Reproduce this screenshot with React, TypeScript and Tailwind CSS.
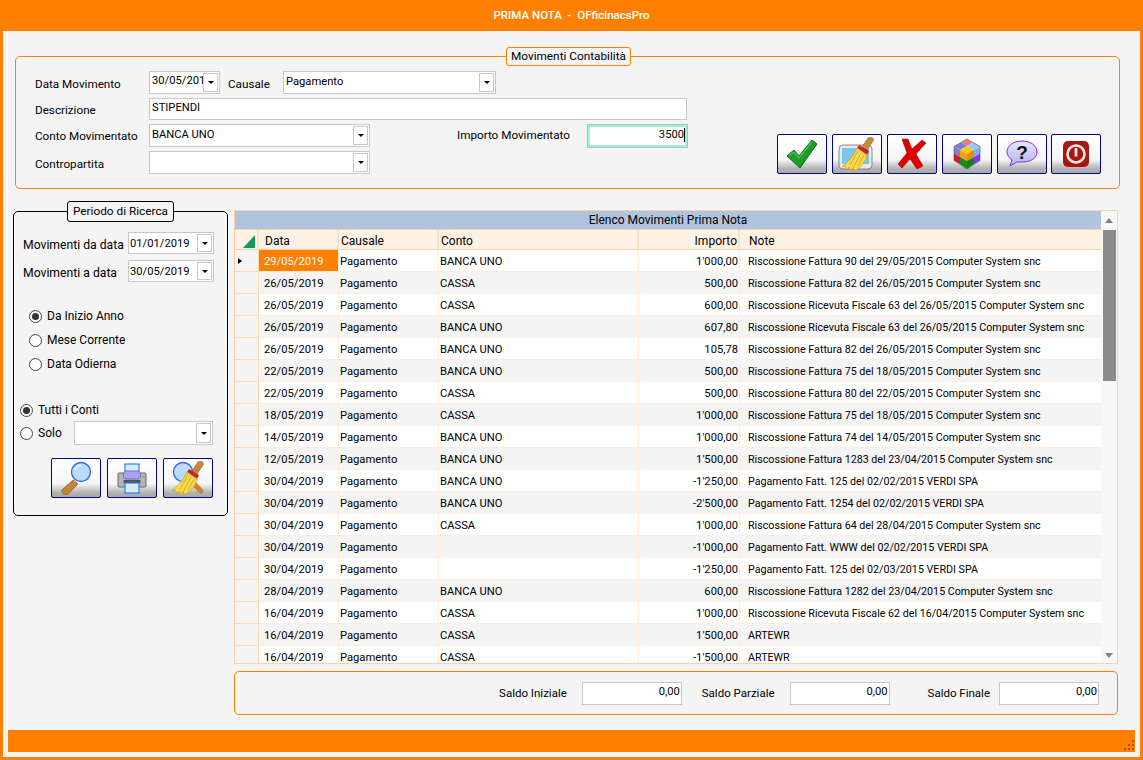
import React from "react";

const font = "font-['Roboto','Open_Sans',sans-serif]";

const rows: [string, string, string, string, string][] = [
  ["29/05/2019", "Pagamento", "BANCA UNO", "1'000,00", "Riscossione Fattura 90 del 29/05/2015 Computer System snc"],
  ["26/05/2019", "Pagamento", "CASSA", "500,00", "Riscossione Fattura 82 del 26/05/2015 Computer System snc"],
  ["26/05/2019", "Pagamento", "CASSA", "600,00", "Riscossione Ricevuta Fiscale 63 del 26/05/2015 Computer System snc"],
  ["26/05/2019", "Pagamento", "BANCA UNO", "607,80", "Riscossione Ricevuta Fiscale 63 del 26/05/2015 Computer System snc"],
  ["26/05/2019", "Pagamento", "BANCA UNO", "105,78", "Riscossione Fattura 82 del 26/05/2015 Computer System snc"],
  ["22/05/2019", "Pagamento", "BANCA UNO", "500,00", "Riscossione Fattura 75 del 18/05/2015 Computer System snc"],
  ["22/05/2019", "Pagamento", "CASSA", "500,00", "Riscossione Fattura 80 del 22/05/2015 Computer System snc"],
  ["18/05/2019", "Pagamento", "CASSA", "1'000,00", "Riscossione Fattura 75 del 18/05/2015 Computer System snc"],
  ["14/05/2019", "Pagamento", "BANCA UNO", "1'000,00", "Riscossione Fattura 74 del 14/05/2015 Computer System snc"],
  ["12/05/2019", "Pagamento", "BANCA UNO", "1'500,00", "Riscossione Fattura 1283 del 23/04/2015 Computer System snc"],
  ["30/04/2019", "Pagamento", "BANCA UNO", "-1'250,00", "Pagamento Fatt. 125 del 02/02/2015 VERDI SPA"],
  ["30/04/2019", "Pagamento", "BANCA UNO", "-2'500,00", "Pagamento Fatt. 1254 del 02/02/2015 VERDI SPA"],
  ["30/04/2019", "Pagamento", "CASSA", "1'000,00", "Riscossione Fattura 64 del 28/04/2015 Computer System snc"],
  ["30/04/2019", "Pagamento", "", "-1'000,00", "Pagamento Fatt. WWW del 02/02/2015 VERDI SPA"],
  ["30/04/2019", "Pagamento", "", "-1'250,00", "Pagamento Fatt. 125 del 02/03/2015 VERDI SPA"],
  ["28/04/2019", "Pagamento", "BANCA UNO", "600,00", "Riscossione Fattura 1282 del 23/04/2015 Computer System snc"],
  ["16/04/2019", "Pagamento", "CASSA", "1'000,00", "Riscossione Ricevuta Fiscale 62 del 16/04/2015 Computer System snc"],
  ["16/04/2019", "Pagamento", "CASSA", "1'500,00", "ARTEWR"],
  ["16/04/2019", "Pagamento", "CASSA", "-1'500,00", "ARTEWR"],
];

function Arrow() {
  return <span className="w-0 h-0 border-x-[3px] border-x-transparent border-t-[3px] border-t-black" />;
}

function Combo({ text, className, textClass = "pl-[1px]" }: { text: string; className: string; textClass?: string }) {
  return (
    <div className={`flex bg-white border border-[#c8c8c8] p-px ${className}`}>
      <span className={`flex-1 text-[11.2px] leading-[15px] overflow-hidden whitespace-nowrap ${textClass}`}>{text}</span>
      <span className="w-[15px] shrink-0 border border-[#c8c8c8] flex items-center justify-center">
        <Arrow />
      </span>
    </div>
  );
}

function Radio({ checked, label, className }: { checked?: boolean; label: string; className: string }) {
  return (
    <div className={`flex items-center h-[16px] ${className}`}>
      <span className="w-[13px] h-[13px] rounded-full border border-[#444] bg-white flex items-center justify-center shrink-0">
        {checked && <span className="w-[7px] h-[7px] rounded-full bg-[#333]" />}
      </span>
      <span className="ml-[5px] text-[12px]">{label}</span>
    </div>
  );
}

function IconButton({ children, className = "" }: { children: React.ReactNode; className?: string }) {
  return (
    <div className={`w-[50px] h-[40px] shrink-0 border border-[#000080] rounded-[2px] bg-[linear-gradient(to_bottom,#ffffff_0%,#f6f6f6_65%,#b4b4b4_88%,#a8a8a8_100%)] flex items-center justify-center ${className}`}>
      {children}
    </div>
  );
}

const Check = () => (
  <svg width="32" height="30" viewBox="0 0 32 30">
    <path d="M1 17 L8 11 L13 17 L26 1 L31 5 L14 29 Z" fill="#1f9a2a" stroke="#136e1c" strokeWidth="1" strokeLinejoin="round" />
    <path d="M3 17 L8 13 L13 19 L26 3" fill="none" stroke="#4cc255" strokeWidth="1.2" />
  </svg>
);

const Cross = () => (
  <svg width="30" height="32" viewBox="0 0 30 32">
    <path d="M5 1 L11 1 L15 11 L25 2 L29 5 L19 16 L26 28 L20 31 L13 21 L5 30 L1 26 L10 15 Z" fill="#dd0000" stroke="#b00000" strokeWidth="0.6" strokeLinejoin="round" />
  </svg>
);

const BroomHead = () => (
  <g>
    <path d="M27 1 C29 -1 34 1 32 4 L26 13 L21 10 Z" fill="#c98a36" stroke="#8a5a1c" strokeWidth="0.6" />
    <path d="M18 8 L28 14 L26 18 L16 11 Z" fill="#c8222a" />
    <path d="M16 11 L26 18 C25 24 20 30 14 34 L12 31 L10 34 L8 30 L6 33 L4 29 L1 30 C7 25 13 18 16 11 Z" fill="#f7d84a" stroke="#c79a1a" strokeWidth="0.7" />
    <path d="M17 14 L9 28 M20 16 L12 31 M23 18 L17 29" stroke="#c79a1a" strokeWidth="0.7" fill="none" />
  </g>
);

const Broom = () => (
  <svg width="38" height="34" viewBox="0 0 38 34">
    <rect x="1" y="8" width="33" height="24" rx="4" fill="#e8e8e8" stroke="#888" />
    <rect x="4" y="11" width="27" height="16" fill="#7cc4ea" />
    <g transform="translate(3 0)"><BroomHead /></g>
  </svg>
);

const Cube = () => (
  <svg width="28" height="32" viewBox="0 0 28 32">
    <path d="M14 1 L20 4.5 L14 8 L8 4.5 Z" fill="#f07a8a" />
    <path d="M20 4.5 L27 8.5 L21 12 L14 8 Z" fill="#9cc8f8" />
    <path d="M8 4.5 L14 8 L7 12 L1 8.5 Z" fill="#7c7ce0" />
    <path d="M14 8 L21 12 L14 16 L7 12 Z" fill="#f8c818" />
    <path d="M1 8.5 L7 12 L7 19 L1 15.5 Z" fill="#8080c8" />
    <path d="M7 12 L14 16 L14 23 L7 19 Z" fill="#f0a010" />
    <path d="M14 16 L21 12 L21 19 L14 23 Z" fill="#e88c08" />
    <path d="M21 12 L27 8.5 L27 15.5 L21 19 Z" fill="#7ab0f0" />
    <path d="M1 15.5 L7 19 L7 26 L1 22.5 Z" fill="#d81818" />
    <path d="M7 19 L14 23 L14 31 L7 26 Z" fill="#188c20" />
    <path d="M14 23 L21 19 L21 26 L14 31 Z" fill="#108018" />
    <path d="M21 19 L27 15.5 L27 22.5 L21 26 Z" fill="#8a30f0" />
    <path d="M14 1 L27 8.5 L27 22.5 L14 31 L1 22.5 L1 8.5 Z" fill="none" stroke="#666" strokeWidth="0.7" />
  </svg>
);

const Question = () => (
  <svg width="32" height="28" viewBox="0 0 32 28">
    <defs>
      <linearGradient id="q" x1="0" y1="0" x2="0" y2="1">
        <stop offset="0" stopColor="#e8e8ff" />
        <stop offset="1" stopColor="#b0b0f8" />
      </linearGradient>
    </defs>
    <path d="M16 1 C25 1 31 6 31 12 C31 18 25 22 16 22 L11 22 L4 26 L6 20 C3 18 1 15 1 12 C1 6 7 1 16 1 Z" fill="url(#q)" stroke="#8a2be2" strokeWidth="1" />
    <text x="16" y="19" textAnchor="middle" fontSize="19" fontWeight="700" fontFamily="Liberation Sans" fill="#111">?</text>
  </svg>
);

const Power = () => (
  <svg width="28" height="28" viewBox="0 0 28 28">
    <rect x="1" y="1" width="26" height="26" rx="5" fill="#aa1512" />
    <circle cx="14" cy="14" r="8.5" fill="none" stroke="#f8e4e0" strokeWidth="2.6" />
    <rect x="12.6" y="8" width="2.8" height="8.5" fill="#f8e4e0" />
  </svg>
);

const Magnifier = () => (
  <svg width="34" height="34" viewBox="0 0 34 34">
    <path d="M14 19 L3 29 C2 32 6 35 9 33 L19 23 Z" fill="#c88432" stroke="#85551c" strokeWidth="0.7" />
    <circle cx="22" cy="11" r="9.5" fill="#bcdcff" stroke="#3a66ee" strokeWidth="1.4" />
    <path d="M16 9 A7 7 0 0 1 22 4" fill="none" stroke="#fff" strokeWidth="1.2" />
  </svg>
);

const Printer = () => (
  <svg width="30" height="32" viewBox="0 0 30 32">
    <rect x="1" y="11" width="28" height="14" rx="1" fill="#b4b4b4" stroke="#666" />
    <rect x="8" y="2" width="14" height="11" fill="#d4ecff" stroke="#2a7af0" strokeWidth="1.2" />
    <rect x="6.5" y="9" width="17" height="8" rx="3" fill="#a8a0f0" stroke="#7070c8" />
    <rect x="6.5" y="18" width="17" height="3" fill="#555" />
    <rect x="8" y="21" width="14" height="10" fill="#d4ecff" stroke="#2a7af0" strokeWidth="1.2" />
    <circle cx="26.5" cy="15" r="1" fill="#60c030" />
  </svg>
);

const SearchBroom = () => (
  <svg width="34" height="34" viewBox="0 0 34 34">
    <circle cx="12" cy="11" r="9.5" fill="#bcdcff" stroke="#3a66ee" strokeWidth="1.4" />
    <path d="M18 18 L30 30" stroke="#c88432" strokeWidth="5" strokeLinecap="round" />
    <BroomHead />
  </svg>
);

export default function App() {
  return (
    <div className={`w-[1143px] h-[760px] overflow-hidden bg-[#ff8000] flex flex-col text-[11.7px] text-black ${font}`}>
      <div className="h-[31px] shrink-0 flex items-center justify-center text-white font-medium text-[11.5px] whitespace-pre">
        PRIMA NOTA  -  OFficinacsPro
      </div>

      <div className="flex-1 mx-[3px] mb-[3px] bg-[#f4f4f4] flex flex-col min-h-0">
        {/* Movimenti Contabilità */}
        <div className="relative mt-[25px] ml-[12px] mr-[20px] h-[133px] shrink-0 border border-[#ff8000] rounded-[5px] flex">
          <div className="absolute left-[490px] -top-[10px] h-[19px] px-[4px] bg-[#f4f4f4] border border-[#ff8000] rounded-[3px] text-[11.8px] leading-[16px] whitespace-nowrap">
            Movimenti Contabilità
          </div>

          <div className="w-[671px] shrink-0 pt-[13px]">
            <div className="flex items-center h-[24px]">
              <span className="ml-[19px] w-[114px] shrink-0 pt-[6px]">Data Movimento</span>
              <Combo text="30/05/2019" className="w-[71px] h-[23px]" />
              <span className="ml-[8px] w-[55px] shrink-0 pt-[6px]">Causale</span>
              <Combo text="Pagamento" textClass="pl-[1px] pt-[1px]" className="w-[213px] h-[23px]" />
            </div>
            <div className="flex items-center h-[22px] mt-[4px]">
              <span className="ml-[19px] w-[114px] shrink-0 pt-[4px]">Descrizione</span>
              <div className="w-[538px] h-[22px] bg-white border border-[#c8c8c8] pl-[2px] text-[11.2px] leading-[17px]">STIPENDI</div>
            </div>
            <div className="flex items-center h-[23px] mt-[4px]">
              <span className="ml-[19px] w-[114px] shrink-0 pt-[2px]">Conto Movimentato</span>
              <Combo text="BANCA UNO" textClass="pl-[1px] pt-[1px]" className="w-[221px] h-[23px]" />
              <span className="ml-[87px] w-[131px] shrink-0">Importo Movimentato</span>
              <div className="w-[99px] h-[22px] bg-white border-2 border-[#9af5dc] outline outline-1 outline-[#bbbbbb] flex justify-end text-[11.2px]">
                <span className="h-[14px] mt-[1px] border-r border-black leading-[14px]">3500</span>
              </div>
            </div>
            <div className="flex items-center h-[23px] mt-[4px]">
              <span className="ml-[19px] w-[114px] shrink-0 pt-[4px]">Contropartita</span>
              <Combo text="" className="w-[221px] h-[23px]" />
            </div>
          </div>

          <div className="flex ml-[90px] mt-[77px] h-[40px]">
            <IconButton><Check /></IconButton>
            <IconButton className="ml-[5px]"><Broom /></IconButton>
            <IconButton className="ml-[5px]"><Cross /></IconButton>
            <IconButton className="ml-[5px]"><Cube /></IconButton>
            <IconButton className="ml-[5px]"><Question /></IconButton>
            <IconButton className="ml-[4px]"><Power /></IconButton>
          </div>
        </div>

        <div className="flex mt-[21px] pl-[10px] min-h-0">
          {/* Periodo di Ricerca */}
          <div className="relative mt-[1px] w-[215px] h-[305px] shrink-0 border border-black rounded-[5px] bg-[#f4f4f4]">
            <div className="absolute left-[53px] -top-[11px] w-[107px] h-[21px] bg-[#f4f4f4] border border-black rounded-[3px] text-center text-[11.8px] leading-[18px]">
              Periodo di Ricerca
            </div>
            <div className="pt-[20px] pl-[9px]">
              <div className="flex items-center h-[22px]">
                <span className="w-[105px] shrink-0 text-[12.2px] whitespace-nowrap pt-[4px]">Movimenti da data</span>
                <Combo text="01/01/2019" textClass="pt-[2px]" className="w-[86px] h-[22px]" />
              </div>
              <div className="flex items-center h-[22px] mt-[6px]">
                <span className="w-[105px] shrink-0 text-[12.2px] whitespace-nowrap pt-[4px]">Movimenti a data</span>
                <Combo text="30/05/2019" textClass="pt-[2px]" className="w-[86px] h-[22px]" />
              </div>
            </div>
            <div className="mt-[26px] ml-[15px] flex flex-col gap-[8px]">
              <Radio checked label="Da Inizio Anno" className="" />
              <Radio label="Mese Corrente" className="" />
              <Radio label="Data Odierna" className="" />
            </div>
            <Radio checked label="Tutti i Conti" className="mt-[30px] ml-[6px]" />
            <div className="flex items-center mt-[3px] ml-[6px]">
              <Radio label="Solo" className="w-[54px] shrink-0" />
              <Combo text="" className="w-[139px] h-[24px] shrink-0" />
            </div>
            <div className="flex gap-[6px] ml-[37px] mt-[13px]">
              <IconButton><Magnifier /></IconButton>
              <IconButton><Printer /></IconButton>
              <IconButton><SearchBroom /></IconButton>
            </div>
          </div>

          <div className="ml-[6px] w-[884px] shrink-0 flex flex-col">
            {/* Grid */}
            <div className="h-[454px] border border-[#f8d2a8] flex overflow-hidden bg-white">
              <div className="w-[866px] shrink-0">
                <div className="h-[19px] bg-[#b0c4de] border-b border-[#f8d2a8] text-center text-[12px] leading-[18px]">Elenco Movimenti Prima Nota</div>
                <div className="h-[20px] grid grid-cols-[24px_80px_100px_200px_101px_361px] bg-[#fff2e5] border-b border-[#f8d2a8] text-[12px]">
                  <div className="border-r-2 border-[#fde0c0] flex items-center justify-end pr-[2px]">
                    <svg width="12" height="13" viewBox="0 0 12 13"><path d="M12 0 V13 H0 Z" fill="#0e9a62" /></svg>
                  </div>
                  <div className="border-r-2 border-[#fde0c0] pl-[6px] leading-[22px]">Data</div>
                  <div className="border-r-2 border-[#fde0c0] pl-[2px] leading-[22px]">Causale</div>
                  <div className="border-r-2 border-[#fde0c0] pl-[2px] leading-[22px]">Conto</div>
                  <div className="border-r-2 border-[#fde0c0] text-right pr-[1px] leading-[22px]">Importo</div>
                  <div className="pl-[9px] leading-[22px]">Note</div>
                </div>
                {rows.map((r, i) => (
                  <div
                    key={i}
                    className={`h-[22px] grid grid-cols-[24px_80px_100px_200px_101px_361px] text-[11.2px] leading-[23px] whitespace-nowrap overflow-hidden ${i % 2 === 1 ? "bg-[#f4f4f4]" : "bg-white"}`}
                  >
                    <div className="h-[22px] bg-[#f4f4f4] border-r border-b border-[#fcd9b0] flex items-center pl-[3px]">
                      {i === 0 && <span className="w-0 h-0 border-y-[3.5px] border-y-transparent border-l-[4px] border-l-black" />}
                    </div>
                    <div className={`h-[22px] pl-[5px] border-r border-b border-[#fdeedd] ${i === 0 ? "bg-[#ff8000] text-white" : ""}`}>{r[0]}</div>
                    <div className="h-[22px] pl-[1px] border-r border-b border-[#fdeedd]">{r[1]}</div>
                    <div className="h-[22px] pl-[1px] border-r border-b border-[#fdeedd]">{r[2]}</div>
                    <div className="h-[22px] pr-[1px] text-right border-r border-b border-[#fdeedd]">{r[3]}</div>
                    <div className="h-[22px] pl-[8px] border-b border-[#fdeedd] overflow-hidden text-[10.7px]">{r[4]}</div>
                  </div>
                ))}
              </div>
              <div className="flex-1 bg-[#f8f8f8] flex flex-col items-center">
                <div className="h-[19px] w-full flex items-center justify-center shrink-0">
                  <span className="w-0 h-0 border-x-[4px] border-x-transparent border-b-[5px] border-b-[#808080]" />
                </div>
                <div className="w-[13px] h-[151px] bg-[#8c8c8c] shrink-0" />
                <div className="flex-1" />
                <div className="h-[16px] w-full flex items-center justify-center shrink-0">
                  <span className="w-0 h-0 border-x-[4px] border-x-transparent border-t-[5px] border-t-[#808080]" />
                </div>
              </div>
            </div>

            {/* Saldi */}
            <div className="mt-[7px] h-[44px] border border-[#ff8000] rounded-[5px] flex items-center justify-end pr-[18px]">
              <span className="text-[11.5px] pt-[2px]">Saldo Iniziale</span>
              <div className="ml-[15px] w-[100px] h-[23px] bg-white border border-[#c8c8c8] text-right pr-[1px] text-[11.2px] leading-[17px]">0,00</div>
              <span className="ml-[20px] text-[11.5px] pt-[2px]">Saldo Parziale</span>
              <div className="ml-[15px] w-[100px] h-[23px] bg-white border border-[#c8c8c8] text-right pr-[1px] text-[11.2px] leading-[17px]">0,00</div>
              <span className="ml-[38px] text-[11.5px] pt-[2px]">Saldo Finale</span>
              <div className="ml-[9px] w-[100px] h-[23px] bg-white border border-[#c8c8c8] text-right pr-[1px] text-[11.2px] leading-[17px]">0,00</div>
            </div>
          </div>
        </div>

        {/* Status bar */}
        <div className="mt-[15px] ml-[5px] mr-[5px] h-[22px] shrink-0 bg-[#ff8000] flex items-end justify-end">
          <svg width="12" height="12" viewBox="0 0 12 12" className="mb-[1px]" fill="#a85400">
            <rect x="9" y="1" width="2" height="2" /><rect x="5" y="5" width="2" height="2" /><rect x="9" y="5" width="2" height="2" />
            <rect x="1" y="9" width="2" height="2" /><rect x="5" y="9" width="2" height="2" /><rect x="9" y="9" width="2" height="2" />
          </svg>
        </div>
      </div>
    </div>
  );
}
